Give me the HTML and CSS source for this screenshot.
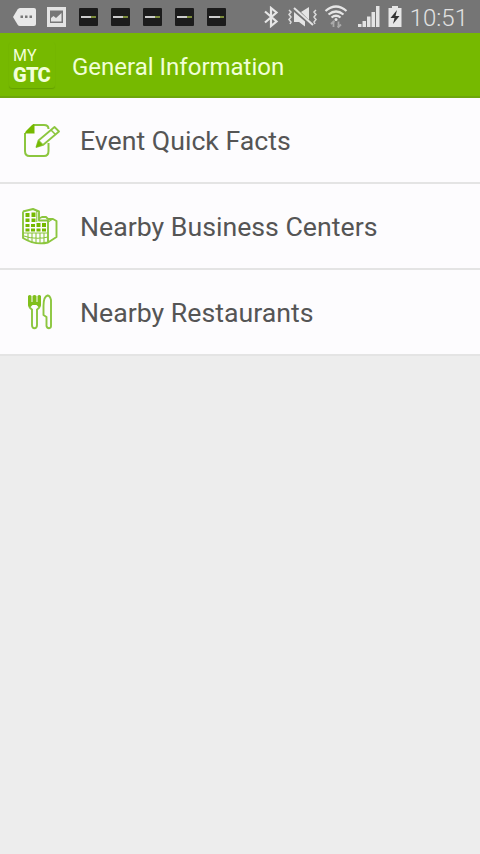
FILE: index.html
```html
<!DOCTYPE html>
<html lang="en">
  <head>
    <meta charset="utf-8">
    <title>General Information</title>
    <link rel="stylesheet" href="styles.css">
  </head>
  <body>
    <div class="status">
      <div class="notifications">
        <svg class="more" width="23" height="18" viewBox="0 0 23 18">
          <path d="M7 0H21Q23 0 23 2V16Q23 18 21 18H7Q5.500 18 4.500 16.500L0 9L4.500 1.500Q5.500 0 7 0Z" fill="#e8e8e8"/>
          <path d="M7.500 7.500h2.500v2.500h-2.500zM12 7.500h2.500v2.500h-2.500zM16.500 7.500h2.500v2.500h-2.500z" fill="#777"/>
        </svg>
        <svg class="photo" width="19" height="20" viewBox="0 0 19 20">
          <path d="M0 0H19V20H0Z" fill="#e4e4e4"/>
          <path d="M3 3.500H16V16H3Z" fill="#777"/>
          <path d="M4 14.500V11L6.500 9L9 11L14.500 6V14.500Z" fill="#e4e4e4"/>
        </svg>
        <div class="app"><i></i></div>
        <div class="app"><i></i></div>
        <div class="app"><i></i></div>
        <div class="app"><i></i></div>
        <div class="app"><i></i></div>
      </div>
      <div class="system">
        <svg class="bluetooth" width="16" height="22" viewBox="0 0 16 22">
          <path d="M2 5.500L13.500 15.500L8 20V2L13.500 6.500L2 16.500" fill="none" stroke="#e6e6e6" stroke-width="2.200"/>
        </svg>
        <svg class="mute" width="32" height="22" viewBox="0 0 32 22">
          <path d="M7 6V16H12L18 20.500V15.500L7 6ZM14 6L22 1V14Z" fill="#e4e4e4"/>
          <path d="M7 2L26 19" stroke="#e4e4e4" stroke-width="2"/>
          <path d="M2 4l2 2-2 2.500 2 2.500-2 2.500 2 2.500-1 2M29 4l-2 2 2 2.500-2 2.500 2 2.500-2 2.500 1 2" fill="none" stroke="#dcdcdc" stroke-width="1.500"/>
        </svg>
        <svg class="wifi" width="24" height="24" viewBox="0 0 24 24">
          <path d="M1.500 6Q12 -3 22.500 6M4.500 9.500Q12 3.500 19.500 9.500M7.500 12.500Q12 9 16.500 12.500" fill="none" stroke="#e6e6e6" stroke-width="2.200"/>
          <circle cx="12" cy="14.500" r="1.500" fill="#e6e6e6"/>
          <path d="M9.500 22V16.500M7 19L9.500 16.500L10.500 17.500M14.500 16.500V22M17 19.500L14.500 22L13.500 21" fill="none" stroke="#aaa" stroke-width="1.800"/>
        </svg>
        <svg class="signal" width="22" height="21" viewBox="0 0 22 21">
          <path d="M0 18h3.500v3h-3.500zM4.500 15h3.500v6h-3.500zM9 10.500h3.500v10.500h-3.500zM13.500 6h3.500v15h-3.500zM18 0h3.500v21h-3.500z" fill="#e4e4e4"/>
        </svg>
        <svg class="battery" width="14" height="21" viewBox="0 0 14 21">
          <path d="M4 0H10V2H13.500V21H.5V2H4Z" fill="#e6e6e6"/>
          <path d="M9 4L2.500 12H6.500L5 18L11.500 10H7.500Z" fill="#333"/>
        </svg>
        <span class="clock">10:51</span>
      </div>
    </div>

    <div class="header">
      <div class="logo">
        <span class="my">MY</span>
        <span class="gtc">GTC</span>
      </div>
      <h1>General Information</h1>
    </div>

    <div class="list">
      <div class="item">
        <svg class="icon" width="40" height="40" viewBox="0 0 40 40">
          <path d="M13 5H24Q28.500 5 28.500 9M28.500 23V31Q28.500 36 24 36H9.500Q5 36 5 31V13" fill="none" stroke="#8cc63f" stroke-width="2"/>
          <path d="M5 13.500Q5 12 6 11L12 5Q13 4 14.500 4.500V13.500Z" fill="#76b900"/>
          <path d="M16.500 27L18.500 20.500L34.500 7L39 11.500L23 25Z" fill="#fdfcfe" stroke="#8cc63f" stroke-width="1.800" stroke-linejoin="round"/>
          <path d="M31 10L35.500 14.500M18.500 20.500L23 25" stroke="#8cc63f" stroke-width="1.500"/>
          <path d="M16 27.500L18.500 20.500L22.500 25Z" fill="#76b900"/>
        </svg>
        <span>Event Quick Facts</span>
      </div>
      <div class="item">
        <svg class="icon" width="40" height="40" viewBox="0 0 40 40">
          <path d="M3 5.500L13 3L19 5.500V14.500H28V36M3 5.500V32Q15 39.500 28 36.500L36.500 31V15L33 13H28M19 12.500L22 11H26L28 13" fill="none" stroke="#8cc63f" stroke-width="1.900" stroke-linejoin="round"/>
          <path d="M28 16L32 13.500" stroke="#8cc63f" stroke-width="1.200"/>
          <path d="M5.500 7h4v4h-4zM11.500 6.500h4v4.500h-4zM5.500 12.500h4v3.500h-4zM11.500 12.500h4v3.500h-4zM5.500 18h4v3h-4zM11 18h4v3h-4zM16.500 17h4v4h-4zM22 17h4v4h-4zM5.500 22.500h4v3h-4zM11 22.500h4v3h-4zM16.500 22.500h4v3h-4zM22 22.500h4v3h-4z" fill="#76b900"/>
          <path d="M16.800 5V16M3 27H28M4 30Q15 34 28 31M8 27v7M12 27v9M16 27v10M20 27v10M24 27v10" fill="none" stroke="#8cc63f" stroke-width="1.100"/>
        </svg>
        <span>Nearby Business Centers</span>
      </div>
      <div class="item">
        <svg class="icon" width="40" height="40" viewBox="0 0 40 40">
          <path d="M9 12Q9 16 12 17.500V33Q12 36.200 14.500 36.200T17 33V17.500Q20 16 20 12" fill="none" stroke="#8cc63f" stroke-width="1.900"/>
          <path d="M8 4q1.800-2 3.500 0v6h1V4q2-2 4 0v6h1V4q1.700-2 3.500 0v8.500q0 2.500-2.500 2.500l-2-2h-4l-2 2q-2.500 0-2.500-2.500z" fill="#80bf1c"/>
          <path d="M31 34V8Q30 3.500 27.500 3.500Q23.500 4.500 23.500 14V23L26.500 25V34Q27 36.200 29 36.200Q31 36 31 34Z" fill="none" stroke="#8cc63f" stroke-width="1.900" stroke-linejoin="round"/>
        </svg>
        <span>Nearby Restaurants</span>
      </div>
    </div>
  </body>
</html>
```
FILE: styles.css
```css
* {
  box-sizing: border-box;
}

body {
  margin: 0;
  background-color: #ededed;
  font-family: Roboto, sans-serif;
}

.status {
  display: flex;
  justify-content: space-between;
  height: 33px;
  padding: 0 12px 0 13px;
  background-color: #757575;
}

.notifications,
.system {
  display: flex;
  align-items: center;
}

.notifications {
  gap: 13px;
}

.more {
  margin-right: -2px;
}

.app {
  display: flex;
  align-items: center;
  justify-content: center;
  width: 19px;
  height: 18px;
  border-radius: 1px;
  background-color: #1c1c1c;
}

.app i {
  width: 15px;
  height: 2px;
  background: linear-gradient(to right, #ccc 70%, #7c8c3c 70%);
}

.bluetooth {
  margin-right: 8px;
}

.mute {
  margin-right: 5px;
}

.wifi {
  margin-right: 10px;
}

.signal {
  margin-right: 8px;
}

.battery {
  margin-right: 8px;
}

.clock {
  padding-top: 3px;
  color: #e2e2e2;
  font-size: 24px;
  font-weight: 300;
  line-height: 33px;
}

.header {
  display: flex;
  align-items: center;
  height: 65px;
  padding-left: 9px;
  background-color: #76b900;
  border-bottom: 2px solid #6da60a;
}

.logo {
  width: 46px;
  height: 46px;
  padding: 3px 0 0 4px;
  border-radius: 3px;
  color: #f2ffd8;
  box-shadow: 0 1px 1px rgba(50, 90, 0, 0.25);
}

.logo span {
  display: block;
}

.my {
  font-size: 16px;
  letter-spacing: 0.3px;
  line-height: 21px;
}

.gtc {
  font-size: 20px;
  font-weight: 900;
  letter-spacing: -0.7px;
  line-height: 18px;
}

h1 {
  margin: 4px 0 0 17px;
  color: #f0ffd6;
  font-size: 24px;
  font-weight: 400;
}

.item {
  display: flex;
  align-items: center;
  height: 86px;
  padding-left: 20px;
  border-bottom: 2px solid #e4e4e4;
  background-color: #fdfcfe;
  color: #555;
  font-size: 26.7px;
}

.item span {
  padding-top: 2px;
}

.icon {
  margin-right: 20px;
}
```
